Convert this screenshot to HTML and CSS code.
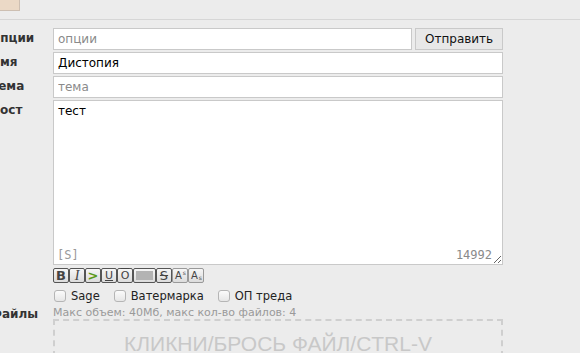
FILE: index.html
```html
<!DOCTYPE html>
<html lang="ru">
<head>
<meta charset="utf-8">
<link rel="stylesheet" href="styles.css">
</head>
<body>
<div class="topbar"><span class="tab"></span></div>
<div class="divider"></div>
<form class="postform">
  <label class="lbl">Опции</label>
  <div class="field row">
    <input class="inp opt" type="text" placeholder="опции">
    <button class="send" type="button">Отправить</button>
  </div>
  <label class="lbl">Имя</label>
  <div class="field"><input class="inp" type="text" value="Дистопия"></div>
  <label class="lbl">Тема</label>
  <div class="field"><input class="inp" type="text" placeholder="тема"></div>
  <label class="lbl lbl-top">Пост</label>
  <div class="field">
    <div class="area-wrap">
      <textarea class="area">тест</textarea>
      <span class="sage-mark">[S]</span>
      <span class="counter">14992</span>
    </div>
    <div class="toolbar">
      <span class="tb tb-b">B</span>
      <span class="tb tb-i">I</span>
      <span class="tb tb-q">&gt;</span>
      <span class="tb tb-u">U</span>
      <span class="tb tb-o">O</span>
      <span class="tb tb-spoiler"><span class="spoil"></span></span>
      <span class="tb tb-s">S</span>
      <span class="tb tb-sup">A<small class="up">s</small></span>
      <span class="tb tb-sub">A<small class="dn">s</small></span>
    </div>
    <div class="checks">
      <label class="chk"><input type="checkbox"><span>Sage</span></label>
      <label class="chk"><input type="checkbox"><span>Ватермарка</span></label>
      <label class="chk"><input type="checkbox"><span>ОП треда</span></label>
    </div>
  </div>
  <label class="lbl lbl-files">Файлы</label>
  <div class="field">
    <div class="limits">Макс объем: 40Мб, макс кол-во файлов: 4</div>
    <div class="drop">КЛИКНИ/БРОСЬ ФАЙЛ/CTRL-V</div>
  </div>
</form>
</body>
</html>
```
FILE: styles.css
```css
html, body {
  margin: 0;
  padding: 0;
  background: #ececec;
  overflow: hidden;
}
body {
  font-family: "DejaVu Sans", Verdana, sans-serif;
  font-size: 12px;
  color: #333;
}
.topbar {
  height: 19px;
}
.tab {
  display: block;
  width: 19px;
  height: 10px;
  background: #ebd9c6;
  border-right: 1px solid #cdbfb2;
  border-bottom: 1px solid #cdbfb2;
}
.divider {
  height: 1px;
  background: #d6d6d6;
}
.postform {
  display: grid;
  grid-template-columns: 53px 450px;
  row-gap: 2px;
  margin-top: 8px;
}
.lbl {
  margin-left: -10px;
  font-weight: bold;
  color: #333;
  font-size: 12px;
  line-height: 21px;
  white-space: nowrap;
}
.lbl-top {
  line-height: 20px;
}
.lbl-files {
  line-height: 16px;
}
.field {
  display: flex;
  flex-direction: column;
}
.field.row {
  flex-direction: row;
  gap: 3px;
}
.inp {
  box-sizing: border-box;
  height: 22px;
  width: 450px;
  margin: 0;
  padding: 0 4px;
  border: 1px solid #c9c9c9;
  background: #fff;
  font-family: "DejaVu Sans", Verdana, sans-serif;
  font-size: 12px;
  color: #000;
  outline: none;
}
.inp::placeholder {
  color: #8a8a8a;
}
.inp.opt {
  width: 360px;
}
.send {
  box-sizing: border-box;
  width: 88px;
  height: 22px;
  margin: 0;
  padding: 0;
  border: 1px solid #c9c9c9;
  background: #e8e8e8;
  font-family: "DejaVu Sans", Verdana, sans-serif;
  font-size: 12px;
  color: #111;
}
.area-wrap {
  position: relative;
  height: 165px;
}
.area {
  box-sizing: border-box;
  display: block;
  width: 450px;
  height: 165px;
  margin: 0;
  padding: 3px 4px;
  border: 1px solid #c9c9c9;
  background: #fff;
  font-family: "DejaVu Sans", Verdana, sans-serif;
  font-size: 12px;
  color: #000;
  resize: both;
  outline: none;
}
.sage-mark {
  position: absolute;
  left: 4px;
  bottom: 3px;
  font-family: "DejaVu Sans Mono", monospace;
  font-size: 12px;
  color: #9a9a9a;
}
.counter {
  position: absolute;
  right: 11px;
  bottom: 3px;
  font-family: "DejaVu Sans Mono", monospace;
  font-size: 12px;
  color: #8a8a8a;
}
.toolbar {
  display: flex;
  margin-top: 3px;
  height: 15px;
}
.tb {
  box-sizing: border-box;
  width: 16px;
  height: 15px;
  border: 1px solid #555;
  border-radius: 2px;
  background: linear-gradient(#f6f6f6, #dcdcdc);
  display: flex;
  align-items: center;
  justify-content: center;
  font-family: "DejaVu Sans", sans-serif;
  font-size: 12px;
  line-height: 1;
  color: #444;
  position: relative;
}
.tb-b { font-weight: bold; font-size: 13px; }
.tb-i { font-style: italic; font-family: "Liberation Serif", serif; font-size: 14px; }
.tb-q { color: #5a9a1a; font-weight: bold; font-size: 13px; }
.tb-u { text-decoration: underline; font-size: 11px; }
.tb-o { text-decoration: overline; font-size: 11px; }
.tb-s { text-decoration: line-through; font-size: 13px; }
.tb-spoiler {
  width: 23px;
  padding: 2px;
}
.spoil {
  display: block;
  width: 100%;
  height: 100%;
  background: #b3b3b3;
}
.tb-sup, .tb-sub {
  border-color: #999;
  font-size: 10px;
  justify-content: flex-start;
  padding-left: 2px;
}
.tb small {
  font-size: 6px;
  position: absolute;
  right: 1px;
}
.tb small.up { top: 1px; }
.tb small.dn { bottom: 1px; }
.checks {
  display: flex;
  gap: 13px;
  margin-top: 5px;
  height: 16px;
  align-items: center;
}
.chk {
  display: flex;
  align-items: center;
  gap: 5px;
  font-size: 11.5px;
  color: #222;
}
.chk input {
  appearance: none;
  -webkit-appearance: none;
  box-sizing: border-box;
  width: 12px;
  height: 12px;
  margin: 0 0 0 1px;
  border: 1px solid #b5b5b5;
  border-radius: 3px;
  background: linear-gradient(#fbfbfb, #e6e6e6);
}
.limits {
  margin-top: 1px;
  font-size: 11px;
  color: #9a9a9a;
  line-height: 12px;
}
.drop {
  box-sizing: border-box;
  height: 70px;
  border: 2px dashed #cfcfcf;
  text-align: center;
  padding-top: 11px;
  font-family: "Liberation Sans", Arial, sans-serif;
  font-size: 21px;
  color: #c8c8c8;
}
```
